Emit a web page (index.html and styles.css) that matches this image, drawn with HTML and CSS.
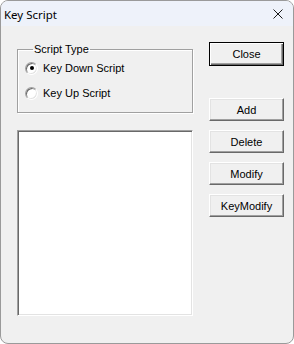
FILE: index.html
```html
<!DOCTYPE html>
<html>
<head>
<meta charset="utf-8">
<link rel="stylesheet" href="styles.css">
</head>
<body>
<div class="window">
  <div class="titlebar">
    <span class="title">Key Script</span>
    <svg class="close-x" width="10" height="10" viewBox="0 0 10 10"><path d="M0.5 0.5 L9.5 9.5 M9.5 0.5 L0.5 9.5" stroke="#1a1a1a" stroke-width="1" fill="none"/></svg>
  </div>
  <div class="content">
    <div class="left">
      <fieldset class="group">
        <legend>Script Type</legend>
        <label class="radio"><span class="circle checked"></span>Key Down Script</label>
        <label class="radio"><span class="circle"></span>Key Up Script</label>
      </fieldset>
      <div class="listbox"></div>
    </div>
    <div class="right">
      <button class="btn default">Close</button>
      <div class="stack">
        <button class="btn">Add</button>
        <button class="btn">Delete</button>
        <button class="btn">Modify</button>
        <button class="btn">KeyModify</button>
      </div>
    </div>
  </div>
</div>
</body>
</html>
```
FILE: styles.css
```css
html, body {
  margin: 0;
  padding: 0;
  background: #ffffff;
}
.window {
  width: 294px;
  height: 344px;
  box-sizing: border-box;
  border: 1px solid #9a9a9a;
  border-radius: 8px;
  background: #f0f0f0;
  overflow: hidden;
  display: flex;
  flex-direction: column;
  font-family: "Liberation Sans", Arial, sans-serif;
  font-size: 11px;
  color: #000;
}
.titlebar {
  height: 25px;
  flex: none;
  background: #eef2fa;
  display: flex;
  align-items: center;
  justify-content: space-between;
  padding: 0 10px 0 3px;
}
.title {
  font-family: "Noto Sans", "Open Sans", sans-serif;
  font-size: 11.5px;
  color: #000;
  margin-top: 1px;
}
.close-x {
  display: block;
  margin-top: 1px;
}
.content {
  display: flex;
  padding: 16px 0 0 16px;
}
.left {
  width: 176px;
  display: flex;
  flex-direction: column;
}
.group {
  margin: 1px 0 0 0;
  padding: 4px 0 11px 7px;
  border: 1px solid #a0a0a0;
  box-shadow: 1px 1px 0 #fff, inset 1px 1px 0 #fff;
  display: flex;
  flex-direction: column;
  gap: 9px;
  min-width: 0;
}
.group legend {
  margin-left: 8px;
  padding: 0 1px;
  line-height: 13px;
}
.radio {
  display: flex;
  align-items: center;
  height: 16px;
  gap: 5px;
}
.circle {
  width: 13px;
  height: 13px;
  box-sizing: border-box;
  border-radius: 50%;
  border: 1px solid;
  border-color: #a0a0a0 #ffffff #ffffff #a0a0a0;
  box-shadow: inset 1px 1px 0 #696969, inset -1px -1px 0 #e3e3e3;
  background: #fff;
  display: flex;
  align-items: center;
  justify-content: center;
}
.circle.checked::after {
  content: "";
  width: 4px;
  height: 4px;
  border-radius: 50%;
  background: #000;
}
.listbox {
  margin-top: 17px;
  height: 186px;
  box-sizing: border-box;
  background: #fff;
  border: 1px solid;
  border-color: #a0a0a0 #ffffff #ffffff #a0a0a0;
  box-shadow: inset 1px 1px 0 #696969, inset -1px -1px 0 #e3e3e3;
}
.right {
  margin-left: 16px;
  display: flex;
  flex-direction: column;
}
.btn {
  width: 75px;
  height: 23px;
  box-sizing: border-box;
  font-family: "Liberation Sans", Arial, sans-serif;
  font-size: 11px;
  color: #000;
  background: #f0f0f0;
  border: 1px solid;
  border-color: #ffffff #696969 #696969 #ffffff;
  box-shadow: inset -1px -1px 0 #a0a0a0, inset 1px 1px 0 #e3e3e3;
  padding: 0;
  margin: 0;
}
.btn.default {
  height: 24px;
  border: 1px solid #000;
  box-shadow: inset 1px 1px 0 #fff, inset -1px -1px 0 #696969, inset -2px -2px 0 #a0a0a0;
}
.stack {
  margin-top: 32px;
  display: flex;
  flex-direction: column;
  gap: 9px;
}
```
